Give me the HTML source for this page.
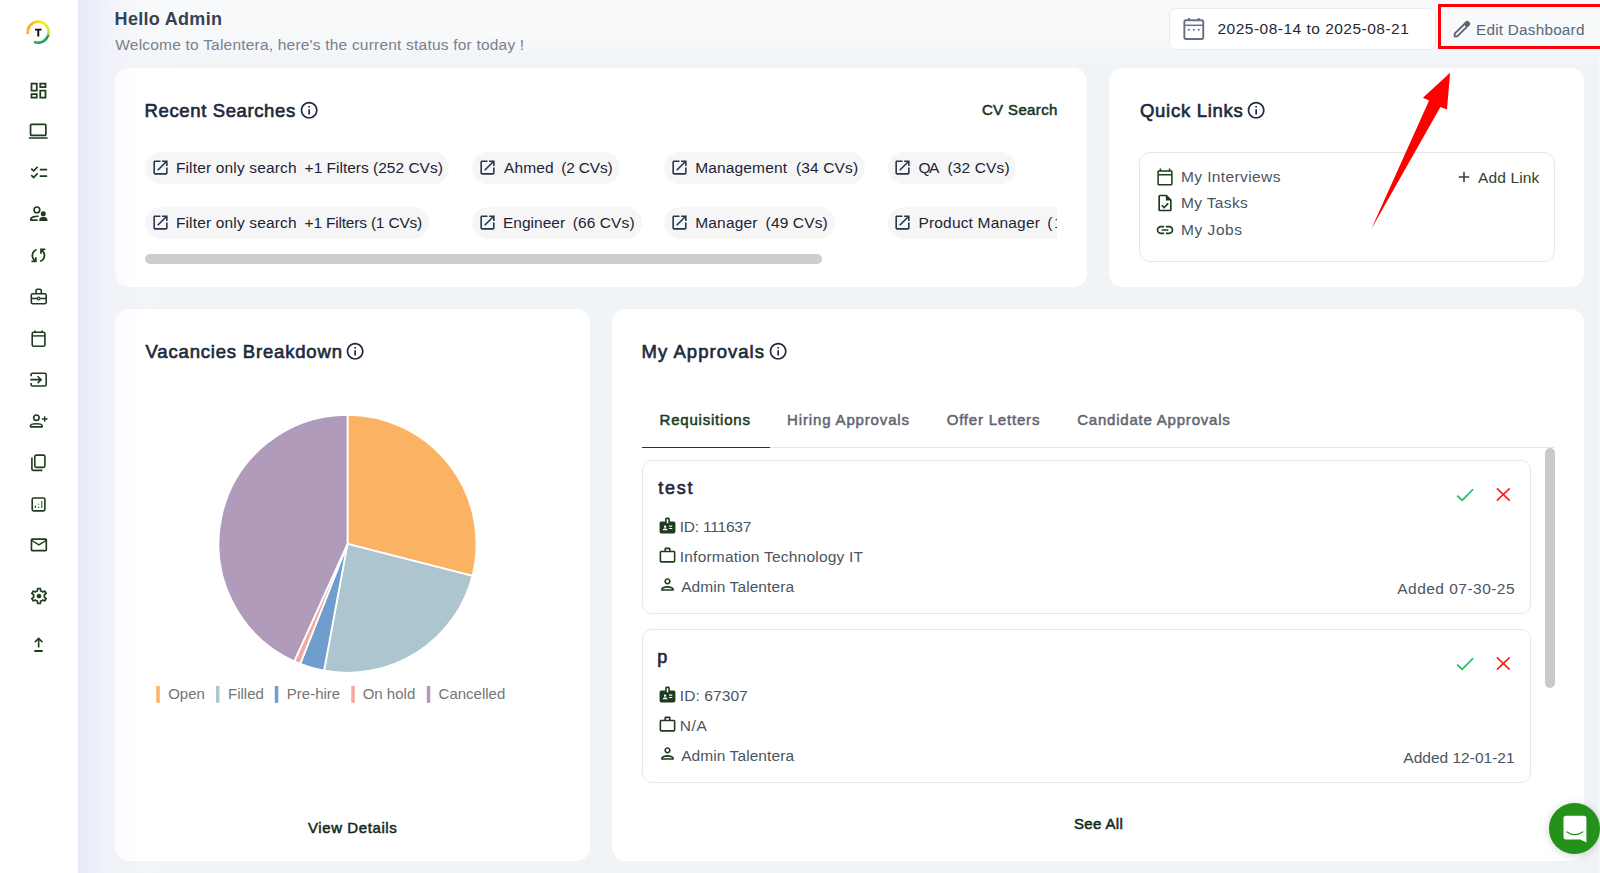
<!DOCTYPE html>
<html>
<head>
<meta charset="utf-8">
<title>Dashboard</title>
<style>
*{box-sizing:border-box;margin:0;padding:0}
html,body{width:1600px;height:873px;overflow:hidden}
body{font-family:"Liberation Sans",sans-serif;background:#f1f4f7;position:relative;color:#1f2937}
.abs{position:absolute}
#bg{position:absolute;left:78px;top:0;width:1522px;height:873px;background:linear-gradient(90deg,#e7e9fa 0px,#ecedfb 14px,#f1f3fa 36px,#f1f4f8 66px,#f1f4f7 120px)}
#bgtop{position:absolute;left:78px;top:0;width:1522px;height:70px;-webkit-mask-image:linear-gradient(90deg,transparent 0,transparent 20px,#000 70px);mask-image:linear-gradient(90deg,transparent 0,transparent 20px,#000 70px);background:linear-gradient(180deg,rgba(255,255,255,.55) 0,rgba(255,255,255,.45) 35px,rgba(255,255,255,.0) 68px)}
#side{position:absolute;left:0;top:0;width:78px;height:873px;background:#fff}
.ico{position:absolute;left:28px;width:21px;height:21px;fill:#1d3b1d}
.card{position:absolute;background:#fff;border-radius:14px}
.t{position:absolute;white-space:pre}
.chip{position:absolute;height:32.600px;border-radius:16.500px;background:#f6f6f7}
.chip svg{position:absolute;left:5.850px;top:6.150px;width:19px;height:19px}
</style>
</head>
<body>
<div id="bg"></div>
<div id="bgtop"></div>
<div id="side"></div>
<div class="abs" style="left:1598.500px;top:0;width:1.500px;height:873px;background:#f8f9fb"></div>

<!-- logo -->
<svg class="abs" style="left:20px;top:14px" width="38" height="38" viewBox="20 14 38 38" fill="none" stroke-width="2.600"><path d="M27.84 33.84 A10.45 10.45 0 0 1 27.71 32.61" stroke="#ff9e14"/><path d="M27.72 32.75 A10.45 10.45 0 0 1 27.72 31.51" stroke="#ff9f13"/><path d="M27.71 31.66 A10.45 10.45 0 0 1 27.84 30.43" stroke="#ffa013"/><path d="M27.82 30.57 A10.45 10.45 0 0 1 28.08 29.36" stroke="#ffa112"/><path d="M28.04 29.50 A10.45 10.45 0 0 1 28.43 28.32" stroke="#ffa212"/><path d="M28.37 28.46 A10.45 10.45 0 0 1 28.88 27.32" stroke="#ffa311"/><path d="M28.81 27.45 A10.45 10.45 0 0 1 29.44 26.38" stroke="#ffa411"/><path d="M29.36 26.50 A10.45 10.45 0 0 1 30.09 25.50" stroke="#ffa510"/><path d="M29.99 25.62 A10.45 10.45 0 0 1 30.83 24.70" stroke="#ffa610"/><path d="M30.72 24.80 A10.45 10.45 0 0 1 31.64 23.97" stroke="#ffa80f"/><path d="M31.53 24.06 A10.45 10.45 0 0 1 32.54 23.34" stroke="#ffab0e"/><path d="M32.41 23.42 A10.45 10.45 0 0 1 33.49 22.80" stroke="#ffb00d"/><path d="M33.36 22.86 A10.45 10.45 0 0 1 34.49 22.36" stroke="#ffb40b"/><path d="M34.35 22.41 A10.45 10.45 0 0 1 35.53 22.03" stroke="#ffb90a"/><path d="M35.39 22.07 A10.45 10.45 0 0 1 36.61 21.81" stroke="#ffbe08"/><path d="M36.46 21.84 A10.45 10.45 0 0 1 37.69 21.71" stroke="#ffc406"/><path d="M37.55 21.72 A10.45 10.45 0 0 1 38.79 21.72" stroke="#ffcd05"/><path d="M38.64 21.71 A10.45 10.45 0 0 1 39.87 21.84" stroke="#ffd603"/><path d="M39.73 21.82 A10.45 10.45 0 0 1 40.94 22.08" stroke="#ffdf01"/><path d="M40.80 22.04 A10.45 10.45 0 0 1 41.98 22.43" stroke="#ffe400"/><path d="M41.84 22.37 A10.45 10.45 0 0 1 42.98 22.88" stroke="#fee501"/><path d="M42.85 22.81 A10.45 10.45 0 0 1 43.92 23.44" stroke="#fde502"/><path d="M43.80 23.36 A10.45 10.45 0 0 1 44.80 24.09" stroke="#fce603"/><path d="M44.68 23.99 A10.45 10.45 0 0 1 45.60 24.83" stroke="#fbe704"/><path d="M45.50 24.72 A10.45 10.45 0 0 1 46.33 25.64" stroke="#f7e607"/><path d="M46.24 25.53 A10.45 10.45 0 0 1 46.96 26.54" stroke="#efe40e"/><path d="M46.88 26.41 A10.45 10.45 0 0 1 47.50 27.49" stroke="#e6e214"/><path d="M47.44 27.36 A10.45 10.45 0 0 1 47.94 28.49" stroke="#dee01a"/><path d="M47.89 28.35 A10.45 10.45 0 0 1 48.27 29.53" stroke="#dadf1c"/><path d="M48.23 29.39 A10.45 10.45 0 0 1 48.49 30.61" stroke="#d5dd1d"/><path d="M48.46 30.46 A10.45 10.45 0 0 1 48.59 31.69" stroke="#d1dc1f"/><path d="M48.58 31.55 A10.45 10.45 0 0 1 48.58 32.79" stroke="#ccdb21"/><path d="M48.59 32.64 A10.45 10.45 0 0 1 48.46 33.87" stroke="#c8d922"/><path d="M48.48 33.73 A10.45 10.45 0 0 1 48.22 34.94" stroke="#c3d824"/><path d="M48.26 34.80 A10.45 10.45 0 0 1 47.87 35.98" stroke="#13a54b"/><path d="M47.93 35.84 A10.45 10.45 0 0 1 47.42 36.98" stroke="#13a44b"/><path d="M47.49 36.85 A10.45 10.45 0 0 1 46.86 37.92" stroke="#12a34a"/><path d="M46.94 37.80 A10.45 10.45 0 0 1 46.21 38.80" stroke="#11a34a"/><path d="M46.31 38.68 A10.45 10.45 0 0 1 45.47 39.60" stroke="#10a24a"/><path d="M45.58 39.50 A10.45 10.45 0 0 1 44.66 40.33" stroke="#10a14a"/><path d="M44.77 40.24 A10.45 10.45 0 0 1 43.76 40.96" stroke="#0fa149"/><path d="M43.89 40.88 A10.45 10.45 0 0 1 42.81 41.50" stroke="#0ea049"/><path d="M42.94 41.44 A10.45 10.45 0 0 1 41.81 41.94" stroke="#0e9f48"/><path d="M41.95 41.89 A10.45 10.45 0 0 1 40.77 42.27" stroke="#0f9f48"/><path d="M40.91 42.23 A10.45 10.45 0 0 1 39.69 42.49" stroke="#0f9e47"/><path d="M39.84 42.46 A10.45 10.45 0 0 1 38.61 42.59" stroke="#0f9d47"/><path d="M38.75 42.58 A10.45 10.45 0 0 1 37.51 42.58" stroke="#109d46"/><path d="M37.66 42.59 A10.45 10.45 0 0 1 36.43 42.46" stroke="#109c46"/><path d="M36.57 42.48 A10.45 10.45 0 0 1 35.36 42.22" stroke="#109b45"/><path d="M35.50 42.26 A10.45 10.45 0 0 1 34.32 41.87" stroke="#119b44"/><path d="M34.46 41.93 A10.45 10.45 0 0 1 34.17 41.81" stroke="#119a44"/><path d="M35 28.800 h6.550 v1.600 h-2.300 v6 h-1.950 v-6 H35z" fill="#111" stroke="none"/></svg>
<!-- sidebar icons -->
<svg class="abs" style="left:27.900px;top:79.900px" width="21" height="21" viewBox="0 0 24 24" fill="#1d3b1d"><path d="M19 5v2h-4V5h4M9 5v6H5V5h4m10 8v6h-4v-6h4M9 17v2H5v-2h4M21 3h-8v6h8V3zM11 3H3v10h8V3zm10 8h-8v10h8V11zm-10 4H3v6h8v-6z"/></svg>
<svg class="abs" style="left:28.45px;top:121.40px" width="20.4" height="20.4" viewBox="0 0 24 24" fill="#1d3b1d"><path d="M1 21v-1.800h22V21H1Zm3-3q-.825 0-1.413-.588T2 16V5q0-.825.588-1.413T4 3h16q.825 0 1.413.588T22 5v11q0 .825-.588 1.413T20 18H4Zm0-2h16V5H4v11Z"/></svg>
<svg class="abs" style="left:28.95px;top:163.00px" width="19.8" height="19.8" viewBox="0 0 24 24" fill="#1d3b1d"><path d="M22 7h-9v2h9V7zm0 8h-9v2h9v-2zM5.540 11L2 7.460l1.410-1.410 2.120 2.120 4.240-4.240 1.410 1.410L5.540 11zm0 8L2 15.460l1.410-1.410 2.120 2.120 4.240-4.240 1.410 1.410L5.540 19z"/></svg>
<svg class="abs" style="left:28.15px;top:244.90px" width="20.8" height="20.8" viewBox="0 0 24 24" fill="#1d3b1d"><path d="M4 20v-2h2.750l-.4-.35q-1.225-1.225-1.787-2.662T4 12.050q0-2.775 1.663-4.937T10 4.250v2.100Q8.200 7 7.100 8.563T6 12.050q0 1.125.425 2.188T7.750 16.200l.25.25V14h2v6H4Zm10-.25v-2.100q1.800-.65 2.900-2.212T18 11.950q0-1.125-.425-2.187T16.250 7.800L16 7.550V10h-2V4h6v2h-2.750l.4.35q1.225 1.225 1.788 2.663T20 11.950q0 2.775-1.663 4.938T14 19.750Z"/></svg>
<svg class="abs" style="left:28.85px;top:535.25px" width="19.8" height="19.8" viewBox="0 0 24 24" fill="#1d3b1d"><path d="M22 6c0-1.100-.9-2-2-2H4c-1.100 0-2 .9-2 2v12c0 1.100.9 2 2 2h16c1.100 0 2-.9 2-2V6zm-2 0l-8 5-8-5h16zm0 12H4V8l8 5 8-5v10z"/></svg>
<svg class="abs" style="left:28.75px;top:585.65px" width="20" height="20" viewBox="0 0 24 24" fill="#1d3b1d"><path d="M19.430 12.980c.04-.32.07-.64.07-.98 0-.34-.03-.66-.07-.98l2.110-1.650c.19-.15.24-.42.12-.64l-2-3.460c-.09-.16-.26-.25-.44-.25-.06 0-.12.010-.17.030l-2.490 1c-.52-.4-1.080-.73-1.690-.98l-.38-2.650C14.460 2.180 14.250 2 14 2h-4c-.25 0-.46.18-.49.42l-.38 2.650c-.61.25-1.170.59-1.690.98l-2.490-1c-.06-.02-.12-.03-.18-.03-.17 0-.34.09-.43.25l-2 3.460c-.13.22-.07.49.12.64l2.110 1.650c-.04.32-.07.65-.07.98 0 .33.03.66.07.98l-2.110 1.650c-.19.15-.24.42-.12.64l2 3.460c.09.16.26.25.44.25.06 0 .12-.01.17-.03l2.490-1c.52.4 1.080.73 1.690.98l.38 2.650c.03.24.24.42.49.42h4c.25 0 .46-.18.490-.42l.38-2.650c.61-.25 1.170-.59 1.690-.98l2.490 1c.06.02.12.03.18.03.17 0 .34-.09.43-.25l2-3.460c.12-.22.07-.49-.12-.64l-2.110-1.650zm-1.980-1.710c.04.31.05.52.05.73 0 .21-.02.43-.05.73l-.14 1.130.89.7 1.080.84-.7 1.210-1.270-.51-1.040-.42-.9.68c-.43.32-.84.56-1.250.73l-1.060.43-.16 1.130-.2 1.350h-1.400l-.19-1.350-.16-1.130-1.060-.43c-.43-.18-.83-.41-1.230-.71l-.91-.7-1.060.43-1.270.51-.7-1.210 1.080-.84.89-.7-.14-1.130c-.03-.31-.05-.54-.05-.74s.02-.43.05-.73l.14-1.130-.89-.7-1.080-.84.7-1.210 1.270.51 1.040.42.9-.68c.43-.32.84-.56 1.250-.73l1.060-.43.16-1.130.2-1.350h1.390l.19 1.350.16 1.130 1.060.43c.43.18.83.41 1.230.71l.91.7 1.060-.43 1.270-.51.7 1.210-1.070.85-.89.7.14 1.130zM12 9.200c-1.550 0-2.800 1.250-2.800 2.800s1.250 2.800 2.800 2.800 2.800-1.250 2.800-2.800-1.250-2.800-2.800-2.800z"/></svg>
<svg class="abs" style="left:0;top:190px" width="78" height="480" viewBox="0 190 78 480" fill="none" stroke="#1d3b1d" stroke-width="1.600" stroke-linejoin="round">
<!-- people -->
<circle cx="36.900" cy="209.900" r="2.850"/>
<path d="M38.600 216.200 C35 216 31 217.200 30.700 219.200 V220.100 H37.600"/>
<circle cx="43.300" cy="213.800" r="2.500" fill="#1d3b1d" stroke="none"/>
<path d="M39.200 220.900 v-.9 c0-2.100 2.600-3.200 4.150-3.200 s4.150 1.100 4.150 3.200 v.9 z" fill="#1d3b1d" stroke="none"/>
<!-- briefcase -->
<rect x="31.300" y="293.700" width="14.900" height="10.100" rx="1.500"/>
<path d="M36.100 293.700 V290.600 a1.400 1.400 0 0 1 1.400-1.400 h2.400 a1.400 1.400 0 0 1 1.400 1.400 V293.700"/>
<path d="M31.300 298.500 H37.200 M40.100 298.500 H46.200" stroke-width="1.400"/>
<circle cx="38.650" cy="298.500" r="1.300" stroke-width="1.200"/>
<!-- calendar -->
<rect x="32.200" y="332.300" width="12.700" height="13.900" rx="1.500"/>
<path d="M32.200 335.900 H44.900" stroke-width="1.400"/>
<path d="M35 330.600 V332.300 M42.100 330.600 V332.300"/>
<!-- exit -->
<path d="M31.100 376.200 V374.700 a1.500 1.500 0 0 1 1.500-1.500 H44.700 a1.500 1.500 0 0 1 1.500 1.500 V384.500 a1.500 1.500 0 0 1-1.500 1.500 H32.600 a1.500 1.500 0 0 1-1.500-1.500 V383.100"/>
<path d="M30.300 379.650 H41 M37.600 376.200 L41.100 379.650 L37.600 383.100" stroke-linejoin="miter"/>
<!-- person add -->
<circle cx="36.400" cy="417.650" r="2.700"/>
<path d="M30.450 426.850 V425.900 C30.450 423.900 33.500 423.700 36.350 423.700 C39.200 423.700 42.200 423.900 42.200 425.900 V426.850 Z"/>
<path d="M41.800 419 H47.600 M44.700 416.200 V421.800" stroke-width="1.400"/>
<!-- copy -->
<rect x="34.800" y="455.100" width="10.100" height="12.300" rx="1.600"/>
<path d="M31.900 457.500 V469 a1.400 1.400 0 0 0 1.400 1.400 H42.400"/>
<!-- chart -->
<rect x="32.200" y="498" width="12.700" height="12.850" rx="1.500"/>
<path d="M41.800 500.900 V507.900" stroke="#6d846d" stroke-width="1.500"/>
<path d="M35.400 505.600 V507.900 M38.600 506.700 V507.900" stroke="#3d573d" stroke-width="1.300"/>
<circle cx="38.600" cy="504.300" r=".7" fill="#6d846d" stroke="none"/>
<!-- upgrade -->
<path d="M38.650 647.400 V638.600 M34.900 642.100 L38.650 638.300 L42.400 642.100" stroke-linejoin="miter"/>
<path d="M34.300 651 H42.700" stroke-width="2"/>
</svg>

<!-- header -->
<div class="t" id="hello" style="left:114.6px;top:3.5px;font-size:18px;line-height:30px;color:#384253;font-weight:bold;letter-spacing:0.3px">Hello Admin</div>
<div class="t" id="welcome" style="left:115.3px;top:29.75px;font-size:15.5px;line-height:30px;color:#7a808c;letter-spacing:0.205px">Welcome to Talentera, here&#39;s the current status for today !</div>

<!-- cards -->
<div class="card" id="c1" style="left:115px;top:68px;width:972px;height:219px;background:linear-gradient(90deg,#fbfbff 0,#fff 26px)"></div>
<div class="card" id="c2" style="left:1109px;top:68px;width:475px;height:219px"></div>
<div class="card" id="c3" style="left:115px;top:309px;width:475px;height:552px;background:linear-gradient(90deg,#fbfbff 0,#fff 26px)"></div>
<div class="card" id="c4" style="left:612px;top:309px;width:972px;height:552px"></div>

<!-- header right -->
<div class="abs" id="datebox" style="left:1168.700px;top:8px;width:267px;height:41.800px;background:#fff;border:1px solid #e9eaee;border-radius:7px"></div>
<svg class="abs" style="left:1178px;top:12px" width="32" height="32" viewBox="1178 12 32 32" fill="none" stroke="#667085" stroke-width="1.900"><rect x="1184.350" y="20.250" width="18.900" height="18.700" rx="1.600"/><path d="M1184.350 25.300 H1203.250" stroke-width="1.500"/><path d="M1188.900 18 V20.300 M1198.700 18 V20.300"/><g fill="#667085" stroke="none"><circle cx="1188.800" cy="29.700" r="1.050"/><circle cx="1193.800" cy="29.700" r="1.050"/><circle cx="1198.800" cy="29.700" r="1.050"/></g></svg>
<div class="t" id="date" style="left:1217.5px;top:14.1px;font-size:15.5px;line-height:30px;color:#1f2733;letter-spacing:0.487px">2025-08-14 to 2025-08-21</div>

<div class="abs" id="redbox" style="left:1438px;top:4px;width:164.500px;height:44.600px;border:3px solid #fb0007"></div>
<svg class="abs" style="left:1451.250px;top:17.750px" width="22" height="22" viewBox="0 0 24 24" fill="#5a6475"><path d="M5 19h1.425L16.200 9.225 14.775 7.800 5 17.575V19Zm-2 2v-4.250L16.200 3.575q.3-.275.663-.425t.762-.15q.4 0 .775.150t.65.45L20.425 5q.3.275.438.650T21 6.400q0 .4-.137.763t-.438.662L7.250 21H3Z"/><path d="M16.500 4.800 L19.300 7.600 L20.300 6.400 L17.600 3.700Z"/></svg>
<div class="t" id="editd" style="left:1476px;top:14.5px;font-size:15.3px;line-height:30px;color:#5b6778;letter-spacing:0.231px">Edit Dashboard</div>

<!-- card1 content -->
<div class="t" id="rs" style="left:144.6px;top:95.9px;font-size:18.5px;line-height:30px;color:#1e293b;-webkit-text-stroke:0.63px #1e293b;letter-spacing:0.618px">Recent Searches</div>
<svg class="abs" style="left:299.05px;top:100.15px" width="20.300" height="20.300" viewBox="0 0 24 24" fill="#1e293b"><path d="M11 7h2v2h-2zm0 4h2v6h-2zm1-9C6.480 2 2 6.480 2 12s4.480 10 10 10 10-4.480 10-10S17.520 2 12 2zm0 18c-4.410 0-8-3.590-8-8s3.590-8 8-8 8 3.590 8 8-3.590 8-8 8z"/></svg>
<div class="t" id="cvs" style="left:981.9px;top:95.1px;font-size:15px;line-height:30px;color:#16351c;-webkit-text-stroke:0.51px #16351c;letter-spacing:0.375px">CV Search</div>
<div class="chip" style="left:145px;top:151.8px;width:304px"><svg viewBox="0 0 24 24" fill="#27364a"><path d="M19 19H5V5h7V3H5c-1.110 0-2 .9-2 2v14c0 1.100.89 2 2 2h14c1.100 0 2-.9 2-2v-7h-2v7zM14 3v2h3.590l-9.830 9.830 1.410 1.410L19 6.410V10h2V3h-7z"/></svg></div>
<div class="t" id="ch1a" style="left:175.9px;top:153px;font-size:15.5px;line-height:30px;color:#1c2434;letter-spacing:0.159px">Filter only search</div>
<div class="t" id="ch1b" style="left:304.6px;top:153px;font-size:15.5px;line-height:30px;color:#1c2434">+1 Filters (252 CVs)</div>
<div class="chip" style="left:472px;top:151.8px;width:147.5px"><svg viewBox="0 0 24 24" fill="#27364a"><path d="M19 19H5V5h7V3H5c-1.110 0-2 .9-2 2v14c0 1.100.89 2 2 2h14c1.100 0 2-.9 2-2v-7h-2v7zM14 3v2h3.590l-9.830 9.830 1.410 1.410L19 6.410V10h2V3h-7z"/></svg></div>
<div class="t" id="ch2a" style="left:504px;top:153px;font-size:15.5px;line-height:30px;color:#1c2434;letter-spacing:0.125px">Ahmed</div>
<div class="t" id="ch2b" style="left:561.2px;top:153px;font-size:15.5px;line-height:30px;color:#1c2434;letter-spacing:-0.167px">(2 CVs)</div>
<div class="chip" style="left:664px;top:151.8px;width:200.5px"><svg viewBox="0 0 24 24" fill="#27364a"><path d="M19 19H5V5h7V3H5c-1.110 0-2 .9-2 2v14c0 1.100.89 2 2 2h14c1.100 0 2-.9 2-2v-7h-2v7zM14 3v2h3.590l-9.830 9.830 1.410 1.410L19 6.410V10h2V3h-7z"/></svg></div>
<div class="t" id="ch3a" style="left:695.25px;top:153px;font-size:15.5px;line-height:30px;color:#1c2434;letter-spacing:0.139px">Management</div>
<div class="t" id="ch3b" style="left:795.9px;top:153px;font-size:15.5px;line-height:30px;color:#1c2434;letter-spacing:0.143px">(34 CVs)</div>
<div class="chip" style="left:887.5px;top:151.8px;width:128.5px"><svg viewBox="0 0 24 24" fill="#27364a"><path d="M19 19H5V5h7V3H5c-1.110 0-2 .9-2 2v14c0 1.100.89 2 2 2h14c1.100 0 2-.9 2-2v-7h-2v7zM14 3v2h3.590l-9.830 9.830 1.410 1.410L19 6.410V10h2V3h-7z"/></svg></div>
<div class="t" id="ch4a" style="left:918.4px;top:153px;font-size:15.5px;line-height:30px;color:#1c2434;letter-spacing:-1.4px">QA</div>
<div class="t" id="ch4b" style="left:947.4px;top:153px;font-size:15.5px;line-height:30px;color:#1c2434;letter-spacing:0.143px">(32 CVs)</div>
<div class="chip" style="left:145px;top:206.8px;width:284px"><svg viewBox="0 0 24 24" fill="#27364a"><path d="M19 19H5V5h7V3H5c-1.110 0-2 .9-2 2v14c0 1.100.89 2 2 2h14c1.100 0 2-.9 2-2v-7h-2v7zM14 3v2h3.590l-9.830 9.830 1.410 1.410L19 6.410V10h2V3h-7z"/></svg></div>
<div class="t" id="ch5a" style="left:175.9px;top:208.2px;font-size:15.5px;line-height:30px;color:#1c2434;letter-spacing:0.159px">Filter only search</div>
<div class="t" id="ch5b" style="left:304.6px;top:208.2px;font-size:15.5px;line-height:30px;color:#1c2434;letter-spacing:-0.197px">+1 Filters (1 CVs)</div>
<div class="chip" style="left:472px;top:206.8px;width:169.5px"><svg viewBox="0 0 24 24" fill="#27364a"><path d="M19 19H5V5h7V3H5c-1.110 0-2 .9-2 2v14c0 1.100.89 2 2 2h14c1.100 0 2-.9 2-2v-7h-2v7zM14 3v2h3.590l-9.830 9.830 1.410 1.410L19 6.410V10h2V3h-7z"/></svg></div>
<div class="t" id="ch6a" style="left:503px;top:208.2px;font-size:15.5px;line-height:30px;color:#1c2434">Engineer</div>
<div class="t" id="ch6b" style="left:572.75px;top:208.2px;font-size:15.5px;line-height:30px;color:#1c2434;letter-spacing:0.093px">(66 CVs)</div>
<div class="chip" style="left:664px;top:206.8px;width:170.5px"><svg viewBox="0 0 24 24" fill="#27364a"><path d="M19 19H5V5h7V3H5c-1.110 0-2 .9-2 2v14c0 1.100.89 2 2 2h14c1.100 0 2-.9 2-2v-7h-2v7zM14 3v2h3.590l-9.830 9.830 1.410 1.410L19 6.410V10h2V3h-7z"/></svg></div>
<div class="t" id="ch7a" style="left:695.25px;top:208.2px;font-size:15.5px;line-height:30px;color:#1c2434;letter-spacing:0.158px">Manager</div>
<div class="t" id="ch7b" style="left:765.6px;top:208.2px;font-size:15.5px;line-height:30px;color:#1c2434;letter-spacing:0.143px">(49 CVs)</div>
<div class="chip" style="left:887.5px;top:206.8px;width:169.5px;border-radius:16.500px 0 0 16.500px"><svg viewBox="0 0 24 24" fill="#27364a"><path d="M19 19H5V5h7V3H5c-1.110 0-2 .9-2 2v14c0 1.100.89 2 2 2h14c1.100 0 2-.9 2-2v-7h-2v7zM14 3v2h3.590l-9.830 9.830 1.410 1.410L19 6.410V10h2V3h-7z"/></svg></div>
<div class="t" id="ch8a" style="left:918.4px;top:208.2px;font-size:15.5px;line-height:30px;color:#1c2434;letter-spacing:0.186px">Product Manager</div>
<div class="t" id="ch8b" style="left:1047.3px;top:208.2px;font-size:15.5px;line-height:30px;color:#1c2434;letter-spacing:1.5px;width:9.7px;overflow:hidden">(1 CVs)</div>

<div class="abs" id="hscroll" style="left:145px;top:254px;width:677px;height:9.500px;border-radius:5px;background:#cdcdcd"></div>

<!-- card2 content -->
<div class="t" id="ql" style="left:1140px;top:95.7px;font-size:18.5px;line-height:30px;color:#1e293b;-webkit-text-stroke:0.63px #1e293b;letter-spacing:0.72px">Quick Links</div>
<svg class="abs" style="left:1246.45px;top:100.05px" width="20.300" height="20.300" viewBox="0 0 24 24" fill="#1e293b"><path d="M11 7h2v2h-2zm0 4h2v6h-2zm1-9C6.480 2 2 6.480 2 12s4.480 10 10 10 10-4.480 10-10S17.520 2 12 2zm0 18c-4.410 0-8-3.590-8-8s3.590-8 8-8 8 3.590 8 8-3.590 8-8 8z"/></svg>

<div class="abs" id="qlbox" style="left:1139px;top:152px;width:415.500px;height:110px;border:1px solid #e6e7ea;border-radius:11px"></div>
<svg class="abs" style="left:1154.500px;top:166.500px" width="20" height="20" viewBox="0 0 24 24" fill="#1d3b1d"><path d="M20 3h-1V1h-2v2H7V1H5v2H4c-1.100 0-2 .9-2 2v16c0 1.100.9 2 2 2h16c1.100 0 2-.9 2-2V5c0-1.100-.9-2-2-2zm0 18H4V10h16v11zm0-13H4V5h16v3z" transform="translate(1 1) scale(0.917)"/></svg>
<svg class="abs" style="left:1154.500px;top:193px" width="20" height="20" viewBox="0 0 24 24" fill="#1d3b1d"><path d="M14 2H6c-1.100 0-2 .9-2 2v16c0 1.100.9 2 2 2h12c1.100 0 2-.9 2-2V8l-6-6zm4 18H6V4h7v5h5v11zm-9.180-6.050L7.400 15.360l3.540 3.540 5.660-5.660-1.410-1.410-4.240 4.240-2.130-2.120z"/></svg>
<svg class="abs" style="left:1154.500px;top:220px" width="20" height="20" viewBox="0 0 24 24" fill="#1d3b1d"><path d="M17 7h-4v2h4c1.650 0 3 1.350 3 3s-1.350 3-3 3h-4v2h4c2.760 0 5-2.240 5-5s-2.240-5-5-5zm-6 8H7c-1.650 0-3-1.350-3-3s1.350-3 3-3h4V7H7c-2.760 0-5 2.240-5 5s2.240 5 5 5h4v-2zm-3-4h8v2H8z"/></svg>
<div class="t" id="ql1" style="left:1181px;top:161.8px;font-size:15.5px;line-height:30px;color:#4b5560;letter-spacing:0.392px">My Interviews</div>
<div class="t" id="ql2" style="left:1181px;top:188px;font-size:15.5px;line-height:30px;color:#4b5560;letter-spacing:0.357px">My Tasks</div>
<div class="t" id="ql3" style="left:1181px;top:215.1px;font-size:15.5px;line-height:30px;color:#4b5560;letter-spacing:0.542px">My Jobs</div>

<svg class="abs" style="left:1455px;top:168px" width="18" height="18" viewBox="0 0 24 24" fill="#2f3f35"><path d="M19 13h-6v6h-2v-6H5v-2h6V5h2v6h6v2z"/></svg>
<div class="t" id="addl" style="left:1478px;top:163.4px;font-size:15.5px;line-height:30px;color:#2f3f35;letter-spacing:0.143px">Add Link</div>

<!-- arrow -->
<svg class="abs" style="left:1360px;top:65px" width="100" height="175" viewBox="1360 65 100 175"><path d="M1450.100 72.800 L1422.900 97.700 L1429.100 100.600 L1371.300 229.100 L1440.400 107 L1447 109.500 Z" fill="#ff0000"/></svg>
<!-- card3 content -->
<div class="t" id="vb" style="left:145.6px;top:336.8px;font-size:18.5px;line-height:30px;color:#1e293b;-webkit-text-stroke:0.63px #1e293b;letter-spacing:0.814px">Vacancies Breakdown</div>
<svg class="abs" style="left:345.4px;top:341.1px" width="20.300" height="20.300" viewBox="0 0 24 24" fill="#1e293b"><path d="M11 7h2v2h-2zm0 4h2v6h-2zm1-9C6.480 2 2 6.480 2 12s4.480 10 10 10 10-4.480 10-10S17.520 2 12 2zm0 18c-4.410 0-8-3.590-8-8s3.590-8 8-8 8 3.590 8 8-3.590 8-8 8z"/></svg>
<svg class="abs" style="left:200px;top:400px" width="300" height="290" viewBox="200 400 300 290"><path d="M347.5 543.8 L347.50 414.80 A129 129 0 0 1 472.45 575.88 Z" fill="#fcb263" stroke="#fff" stroke-width="1.800" stroke-linejoin="round"/><path d="M347.5 543.8 L472.45 575.88 A129 129 0 0 1 323.99 670.64 Z" fill="#adc5cf" stroke="#fff" stroke-width="1.800" stroke-linejoin="round"/><path d="M347.5 543.8 L323.99 670.64 A129 129 0 0 1 300.22 663.82 Z" fill="#6f9dce" stroke="#fff" stroke-width="1.800" stroke-linejoin="round"/><path d="M347.5 543.8 L300.22 663.82 A129 129 0 0 1 294.21 661.28 Z" fill="#f2a9a0" stroke="#fff" stroke-width="1.800" stroke-linejoin="round"/><path d="M347.5 543.8 L294.21 661.28 A129 129 0 0 1 347.50 414.80 Z" fill="#b09bba" stroke="#fff" stroke-width="1.800" stroke-linejoin="round"/></svg>
<svg class="abs" style="left:154px;top:684px" width="10" height="22" viewBox="154 684 10 22"><rect x="156.25" y="686" width="3.500" height="16.800" fill="#fcb263"/></svg><div class="t" id="lg1" style="left:168.2px;top:678.5px;font-size:15px;line-height:30px;color:#757575">Open</div>
<svg class="abs" style="left:214px;top:684px" width="10" height="22" viewBox="214 684 10 22"><rect x="216" y="686" width="3.500" height="16.800" fill="#adc5cf"/></svg><div class="t" id="lg2" style="left:228px;top:678.5px;font-size:15px;line-height:30px;color:#757575">Filled</div>
<svg class="abs" style="left:272px;top:684px" width="10" height="22" viewBox="272 684 10 22"><rect x="274.8" y="686" width="3.500" height="16.800" fill="#6f9dce"/></svg><div class="t" id="lg3" style="left:286.8px;top:678.5px;font-size:15px;line-height:30px;color:#757575">Pre-hire</div>
<svg class="abs" style="left:349px;top:684px" width="10" height="22" viewBox="349 684 10 22"><rect x="351.3" y="686" width="3.500" height="16.800" fill="#f2a9a0"/></svg><div class="t" id="lg4" style="left:362.7px;top:678.5px;font-size:15px;line-height:30px;color:#757575">On hold</div>
<svg class="abs" style="left:424px;top:684px" width="10" height="22" viewBox="424 684 10 22"><rect x="426.8" y="686" width="3.500" height="16.800" fill="#b09bba"/></svg><div class="t" id="lg5" style="left:438.6px;top:678.5px;font-size:15px;line-height:30px;color:#757575">Cancelled</div>
<div class="t" id="vd" style="left:308px;top:812.75px;font-size:15px;line-height:30px;color:#12281a;-webkit-text-stroke:0.51px #12281a;letter-spacing:0.591px">View Details</div>

<!-- card4 content -->
<div class="t" id="ma" style="left:641.6px;top:336.75px;font-size:18.5px;line-height:30px;color:#1e293b;-webkit-text-stroke:0.63px #1e293b;letter-spacing:1.027px">My Approvals</div>
<svg class="abs" style="left:767.6px;top:340.8px" width="20.300" height="20.300" viewBox="0 0 24 24" fill="#1e293b"><path d="M11 7h2v2h-2zm0 4h2v6h-2zm1-9C6.480 2 2 6.480 2 12s4.480 10 10 10 10-4.480 10-10S17.520 2 12 2zm0 18c-4.410 0-8-3.590-8-8s3.590-8 8-8 8 3.590 8 8-3.590 8-8 8z"/></svg>

<div class="abs" style="left:642px;top:446.500px;width:912px;height:1.500px;background:#e3e4e6"></div>
<div class="abs" style="left:641.500px;top:446.500px;width:128px;height:1.500px;background:#1c3a1c"></div>
<div class="t" id="tab1" style="left:659.6px;top:404.8px;font-size:15px;line-height:30px;color:#1c3a1c;-webkit-text-stroke:0.51px #1c3a1c;letter-spacing:0.782px">Requisitions</div>
<div class="t" id="tab2" style="left:787.1px;top:404.8px;font-size:15px;line-height:30px;color:#5f6670;-webkit-text-stroke:0.51px #5f6670;letter-spacing:0.847px">Hiring Approvals</div>
<div class="t" id="tab3" style="left:946.7px;top:404.8px;font-size:15px;line-height:30px;color:#5f6670;-webkit-text-stroke:0.51px #5f6670;letter-spacing:0.8px">Offer Letters</div>
<div class="t" id="tab4" style="left:1077.2px;top:404.8px;font-size:15px;line-height:30px;color:#5f6670;-webkit-text-stroke:0.51px #5f6670;letter-spacing:0.789px">Candidate Approvals</div>
<div class="abs" style="left:642px;top:460px;width:888.500px;height:153.500px;border:1px solid #e7e8ee;border-radius:10px;background:#fff"></div>
<div class="t" id="it1t" style="left:658.25px;top:473.3px;font-size:18px;line-height:30px;color:#1e293b;-webkit-text-stroke:0.61px #1e293b;letter-spacing:1.717px">test</div>
<svg class="abs" style="left:657.500px;top:516px" width="19" height="19" viewBox="0 0 24 24" fill="#1d3b1d"><path d="M20 7h-5V4c0-1.100-.9-2-2-2h-2c-1.100 0-2 .9-2 2v3H4c-1.100 0-2 .9-2 2v11c0 1.100.9 2 2 2h16c1.100 0 2-.9 2-2V9c0-1.100-.9-2-2-2zM9 12c.83 0 1.500.67 1.500 1.500S9.830 15 9 15s-1.500-.67-1.500-1.500S8.170 12 9 12zm3 6H6v-.75c0-1 2-1.500 3-1.500s3 .5 3 1.500V18zm1-9h-2V4h2v5zm5 7.500h-4V15h4v1.500zm0-3h-4V12h4v1.500z"/></svg>
<div class="t" id="it1a" style="left:679.75px;top:511.9px;font-size:15.5px;line-height:30px;color:#4b5560;letter-spacing:-0.217px">ID: 111637</div>
<svg class="abs" style="left:657.500px;top:545.5px" width="19" height="19" viewBox="0 0 24 24" fill="#1d3b1d"><path d="M14 6V4h-4v2h4zM4 8v11h16V8H4zm16-2c1.110 0 2 .89 2 2v11c0 1.110-.89 2-2 2H4c-1.110 0-2-.89-2-2l.01-11c0-1.110.88-2 1.990-2h4V4c0-1.110.89-2 2-2h4c1.110 0 2 .89 2 2v2h4z"/></svg>
<div class="t" id="it1b" style="left:679.75px;top:541.8px;font-size:15.5px;line-height:30px;color:#4b5560;letter-spacing:0.219px">Information Technology IT</div>
<svg class="abs" style="left:658px;top:575px" width="19" height="19" viewBox="0 0 24 24" fill="#1d3b1d"><path d="M12 6c1.100 0 2 .9 2 2s-.9 2-2 2-2-.9-2-2 .9-2 2-2m0 10c2.700 0 5.800 1.290 6 2H6c.23-.72 3.310-2 6-2m0-12C9.790 4 8 5.790 8 8s1.790 4 4 4 4-1.790 4-4-1.790-4-4-4zm0 10c-2.670 0-8 1.340-8 4v2h16v-2c0-2.660-5.330-4-8-4z"/></svg>
<div class="t" id="it1c" style="left:681.2px;top:571.5px;font-size:15.5px;line-height:30px;color:#4b5560;letter-spacing:0.079px">Admin Talentera</div>
<div class="t" id="it1d" style="left:1397.3px;top:573.9px;font-size:15.5px;line-height:30px;color:#4b5560;letter-spacing:0.469px">Added 07-30-25</div>
<svg class="abs" style="left:1450px;top:480px" width="70" height="30" viewBox="1450 480 70 30" fill="none" stroke-width="1.700"><path d="M1457.200 495.600 L1462.200 500.300 L1473.100 489.250" stroke="#14c05a"/><path d="M1496.900 488.400 L1509.700 500.600 M1509.700 488.400 L1496.900 500.600" stroke="#ff1f1f"/></svg>
<div class="abs" style="left:642px;top:629px;width:888.500px;height:153.500px;border:1px solid #e7e8ee;border-radius:10px;background:#fff"></div>
<div class="t" id="it2t" style="left:657.25px;top:642.3px;font-size:18px;line-height:30px;color:#1e293b;-webkit-text-stroke:0.61px #1e293b">p</div>
<svg class="abs" style="left:657.500px;top:685px" width="19" height="19" viewBox="0 0 24 24" fill="#1d3b1d"><path d="M20 7h-5V4c0-1.100-.9-2-2-2h-2c-1.100 0-2 .9-2 2v3H4c-1.100 0-2 .9-2 2v11c0 1.100.9 2 2 2h16c1.100 0 2-.9 2-2V9c0-1.100-.9-2-2-2zM9 12c.83 0 1.500.67 1.500 1.500S9.830 15 9 15s-1.500-.67-1.500-1.500S8.170 12 9 12zm3 6H6v-.75c0-1 2-1.500 3-1.500s3 .5 3 1.500V18zm1-9h-2V4h2v5zm5 7.500h-4V15h4v1.500zm0-3h-4V12h4v1.500z"/></svg>
<div class="t" id="it2a" style="left:679.75px;top:680.9px;font-size:15.5px;line-height:30px;color:#4b5560;letter-spacing:0.094px">ID: 67307</div>
<svg class="abs" style="left:657.500px;top:714.5px" width="19" height="19" viewBox="0 0 24 24" fill="#1d3b1d"><path d="M14 6V4h-4v2h4zM4 8v11h16V8H4zm16-2c1.110 0 2 .89 2 2v11c0 1.110-.89 2-2 2H4c-1.110 0-2-.89-2-2l.01-11c0-1.110.88-2 1.990-2h4V4c0-1.110.89-2 2-2h4c1.110 0 2 .89 2 2v2h4z"/></svg>
<div class="t" id="it2b" style="left:679.75px;top:710.8px;font-size:15.5px;line-height:30px;color:#4b5560;letter-spacing:0.625px">N/A</div>
<svg class="abs" style="left:658px;top:744px" width="19" height="19" viewBox="0 0 24 24" fill="#1d3b1d"><path d="M12 6c1.100 0 2 .9 2 2s-.9 2-2 2-2-.9-2-2 .9-2 2-2m0 10c2.700 0 5.800 1.290 6 2H6c.23-.72 3.310-2 6-2m0-12C9.790 4 8 5.790 8 8s1.790 4 4 4 4-1.790 4-4-1.790-4-4-4zm0 10c-2.670 0-8 1.340-8 4v2h16v-2c0-2.660-5.330-4-8-4z"/></svg>
<div class="t" id="it2c" style="left:681.2px;top:740.5px;font-size:15.5px;line-height:30px;color:#4b5560;letter-spacing:0.079px">Admin Talentera</div>
<div class="t" id="it2d" style="left:1403.3px;top:742.9px;font-size:15.5px;line-height:30px;color:#4b5560;letter-spacing:0.008px">Added 12-01-21</div>
<svg class="abs" style="left:1450px;top:649px" width="70" height="30" viewBox="1450 480 70 30" fill="none" stroke-width="1.700"><path d="M1457.200 495.600 L1462.200 500.300 L1473.100 489.250" stroke="#14c05a"/><path d="M1496.900 488.400 L1509.700 500.600 M1509.700 488.400 L1496.900 500.600" stroke="#ff1f1f"/></svg>

<div class="abs" id="vscroll" style="left:1545px;top:447.500px;width:9.500px;height:240.500px;border-radius:5px;background:#c9c9c9"></div>
<div class="t" id="seeall" style="left:1073.9px;top:808.7px;font-size:15px;line-height:30px;color:#12281a;-webkit-text-stroke:0.51px #12281a;letter-spacing:0.383px">See All</div>

<!-- chat -->
<div class="abs" id="chat" style="left:1549px;top:803.300px;width:50.500px;height:50.500px;border-radius:50%;background:#22921a;box-shadow:0 1px 8px rgba(0,0,0,.18)"></div>
<svg class="abs" style="left:1555px;top:810px" width="40" height="40" viewBox="1555 810 40 40"><path d="M1566 815.700 h17.900 a2.500 2.500 0 0 1 2.500 2.500 V842.600 L1580.300 839.500 H1566 a2.500 2.500 0 0 1 -2.500 -2.500 V818.200 a2.500 2.500 0 0 1 2.500 -2.500 z" fill="#fff"/><path d="M1567 832 Q1574.800 837.300 1582.600 832" fill="none" stroke="#22921a" stroke-width="1.400" stroke-linecap="round"/></svg>

</body>
</html>
